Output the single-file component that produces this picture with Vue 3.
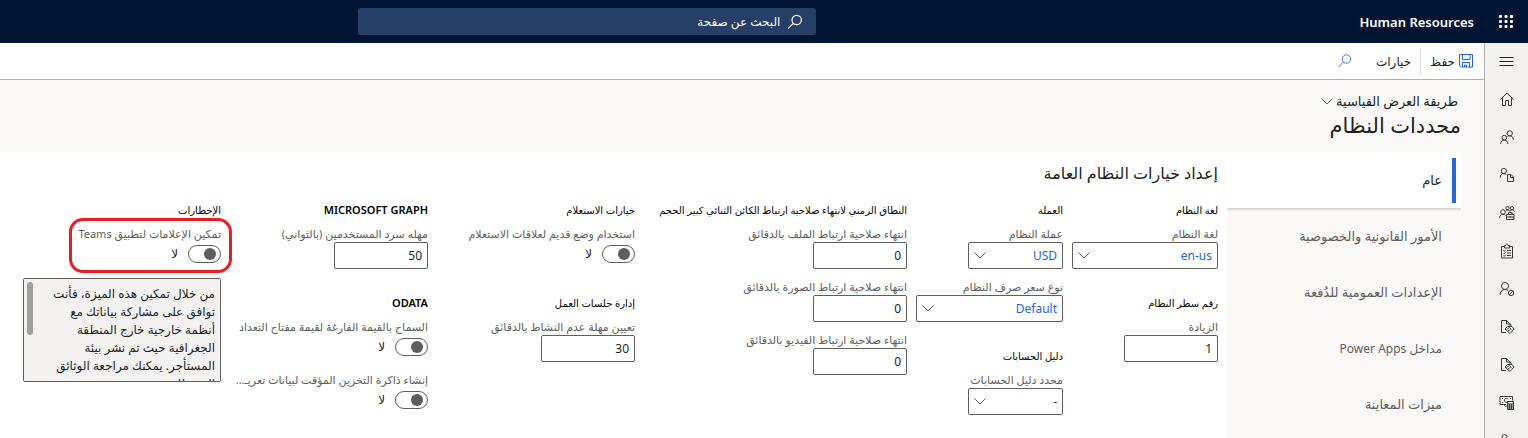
<script setup>
import { ref } from 'vue'

const tabs = [
  'عام',
  'الأمور القانونية والخصوصية',
  'الإعدادات العمومية للدُفعة',
  'مداخل Power Apps',
  'ميزات المعاينة',
]
const activeTab = ref(0)
const hasLatin = (text) => /[A-Za-z]/.test(text)

const navItems = [
  { icon: 'home', label: 'الصفحة الرئيسية' },
  { icon: 'people', label: 'الأشخاص' },
  { icon: 'personDoc', label: 'ملف الموظف' },
  { icon: 'team', label: 'الفريق' },
  { icon: 'clipboard', label: 'المهام' },
  { icon: 'personBlock', label: 'الإجازات والغياب' },
  { icon: 'docTag', label: 'المزايا' },
  { icon: 'docTag', label: 'إدارة المزايا' },
  { icon: 'payroll', label: 'التعويضات' },
  { icon: 'person', label: 'الخدمة الذاتية' },
]

const columns = ref([
  [
    { title: 'لغة النظام', fields: [{ id: 'lang', type: 'select', label: 'لغة النظام', value: 'en-us', size: 'full' }] },
    { title: 'رقم سطر النظام', fields: [{ id: 'inc', type: 'text', label: 'الزيادة', value: '1' }] },
  ],
  [
    {
      title: 'العملة',
      fields: [
        { id: 'cur', type: 'select', label: 'عملة النظام', value: 'USD' },
        { id: 'rate', type: 'select', label: 'نوع سعر صرف النظام', value: 'Default', size: 'full' },
      ],
    },
    { title: 'دليل الحسابات', fields: [{ id: 'coa', type: 'select', label: 'محدد دليل الحسابات', value: '-', plain: true }] },
  ],
  [
    {
      title: 'النطاق الزمني لانتهاء صلاحية ارتباط الكائن الثنائي كبير الحجم',
      fields: [
        { id: 'file', type: 'text', label: 'انتهاء صلاحية ارتباط الملف بالدقائق', value: '0' },
        { id: 'image', type: 'text', label: 'انتهاء صلاحية ارتباط الصورة بالدقائق', value: '0' },
        { id: 'video', type: 'text', label: 'انتهاء صلاحية ارتباط الفيديو بالدقائق', value: '0' },
      ],
    },
  ],
  [
    { title: 'خيارات الاستعلام', fields: [{ id: 'legacy', type: 'toggle', label: 'استخدام وضع قديم لعلاقات الاستعلام', value: false }] },
    { title: 'إدارة جلسات العمل', fields: [{ id: 'idle', type: 'text', label: 'تعيين مهلة عدم النشاط بالدقائق', value: '30' }] },
  ],
  [
    { title: 'MICROSOFT GRAPH', fields: [{ id: 'graph', type: 'text', label: 'مهله سرد المستخدمين (بالثواني)', value: '50' }] },
    {
      title: 'ODATA',
      fields: [
        { id: 'enum', type: 'toggle', label: 'السماح بالقيمة الفارغة لقيمة مفتاح التعداد', value: false },
        { id: 'cache', type: 'toggle', label: 'إنشاء ذاكرة التخزين المؤقت لبيانات تعريـ...', value: false },
      ],
    },
  ],
  [
    {
      title: 'الإخطارات',
      fields: [
        { id: 'teams', type: 'toggle', label: 'تمكين الإعلامات لتطبيق Teams', value: false, marked: true },
        {
          id: 'note',
          type: 'note',
          label: 'إشعار الخصوصية',
          value:
            'من خلال تمكين هذه الميزة، فأنت توافق على مشاركة بياناتك مع أنظمة خارجية خارج المنطقة الجغرافية حيث تم نشر بيئة المستأجر. يمكنك مراجعة الوثائق الفنية للميزة.',
        },
      ],
    },
  ],
])
</script>

<template>
  <div class="app" dir="rtl" lang="ar">
    <header class="topbar">
      <button class="waffle" type="button" aria-label="مشغل التطبيقات">
        <svg width="14" height="14" viewBox="0 0 14 14" fill="#fff">
          <template v-for="r in 3" :key="r">
            <rect v-for="c in 3" :key="c" :x="(c - 1) * 5.5" :y="(r - 1) * 5" width="3" height="3" rx="1" />
          </template>
        </svg>
      </button>
      <a class="brand" href="#">Human Resources</a>
      <div class="search">
        <svg width="16" height="16" viewBox="0 0 16 16" fill="none" stroke="#fff" stroke-width="1.2">
          <circle cx="9.7" cy="6" r="4.7" />
          <path d="M6.3 9.4 1 14.7" />
        </svg>
        <input type="text" aria-label="البحث عن صفحة" placeholder="البحث عن صفحة" />
      </div>
    </header>

    <div class="body">
      <nav class="rail" aria-label="التنقل">
        <button type="button" class="menu" aria-label="القائمة">
          <svg width="15" height="11" viewBox="0 0 15 11" stroke="#222" stroke-width="1">
            <path d="M.5 1.5h14M.5 5.5h14M.5 9.5h14" />
          </svg>
        </button>
        <button v-for="(n, i) in navItems" :key="i" type="button" :aria-label="n.label">
          <svg width="16" height="16" viewBox="0 0 16 16" fill="none" stroke="#3b3a39" stroke-width="1">
            <path v-if="n.icon === 'home'" d="M1.500 8.500 8 2l6.500 6.500M3.500 7v7.500h3V9.500h3v5h3V7" />
            <template v-else-if="n.icon === 'people'">
              <circle cx="10.800" cy="4.300" r="2.600" />
              <circle cx="5.300" cy="8.700" r="2.400" />
              <path d="M8.500 7.500c.6-.4 1.300-.6 2.200-.6 2.100 0 3.500 1.400 3.700 3.600M1.700 15c0-2.500 1.500-3.900 3.600-3.900s3.600 1.400 3.600 3.900" />
            </template>
            <template v-else-if="n.icon === 'personDoc'">
              <circle cx="4.800" cy="4" r="2.600" />
              <path d="M1.200 10.800c0-2.700 1.600-4.200 3.600-4.200 1 0 1.900.4 2.600 1M8.500 7.500h3.500l2.500 2.500v4.500h-6zM11.500 7.500v3h3" />
            </template>
            <template v-else-if="n.icon === 'team'">
              <circle cx="4" cy="7" r="2.300" />
              <circle cx="8.500" cy="3.200" r="1.700" />
              <circle cx="13" cy="3.200" r="1.700" />
              <path d="M.5 13c0-2.400 1.500-3.700 3.500-3.700 1.100 0 2 .4 2.600 1M6.500 6c.5-.8 1.200-1.100 2-1.100 1 0 1.800.6 2.200 1.400.4-.8 1.300-1.400 2.300-1.400 1.100 0 2 .6 2.500 1.600M7.500 9.500h7.500v5H7.500zM9.500 9.500v-2h3.500v2M7.500 12h7.500M11.200 11v2" />
            </template>
            <path v-else-if="n.icon === 'clipboard'" d="M5.500 3.500h-3v11.500h11V3.500h-3M5.500 2.500h1.500c0-2 2-2 2 0h1.500v2.500h-5zM4.500 7.500l.8.800 1.200-1.400M8 7.500h4M4.500 10l.8.800L6.500 9.400M8 10h4M4.500 12.500l.8.800 1.200-1.400M8 12.500h4" />
            <template v-else-if="n.icon === 'personBlock'">
              <circle cx="6" cy="5" r="3.500" />
              <circle cx="12" cy="12" r="2.700" />
              <path d="M1 14c0-3.300 2-5.500 5-5.500 1.200 0 2.200.3 3 .9M10.200 13.800l3.600-3.600" />
            </template>
            <path v-else-if="n.icon === 'docTag'" d="M7 13.500H2.500v-12h5L11 5v2M7.500 1.500V5H11M6 10l2.500-2.500h4.500L15 10l-4 4.500zM7.500 10.500l3-2 2 2M9 12l2.500-1.500M11 4.500l1.500 2" />
            <path v-else-if="n.icon === 'payroll'" d="M7 9.500H1v-8h12.500v4M3 3.500h1M11 3.500h1M3 7.500h1M8.500 7a2 2 0 1 1 .6-2.500M5 9.500l1.500 2h1M8.500 6.500h6v8h-6zM8.500 9h6M10.500 9v5.500M12.500 9v5.500M8.500 11h6M8.500 13h6" />
            <template v-else>
              <circle cx="5.500" cy="4" r="2.500" />
              <path d="M1 11c0-3 2-4.500 4.500-4.500S10 8 10 11" />
            </template>
          </svg>
        </button>
      </nav>

      <main class="main">
        <div class="commands">
          <button type="button" class="save">
            <svg width="14" height="14" viewBox="0 0 14 14" fill="none" stroke="#2266e3" stroke-width="1">
              <path d="M1 .5h12.500v12.500H2.500L.5 11.500V.5zM3.500 .5v5h7.500v-5M3.500 13V8.500h7V13M5.500 13v-2h2v2" />
            </svg>
            <span>حفظ</span>
          </button>
          <button type="button" class="options">خيارات</button>
          <button type="button" class="find" aria-label="بحث">
            <svg width="14" height="14" viewBox="0 0 14 14" fill="none" stroke="#5b74d8" stroke-width="1">
              <circle cx="8.500" cy="5" r="4.200" />
              <path d="M5.500 8 .5 13" />
            </svg>
          </button>
        </div>

        <div class="heading">
          <button type="button" class="view">
            <span>طريقة العرض القياسية</span>
            <svg class="chev" width="12" height="7" viewBox="0 0 12 7"><path d="M.5.5 6 6 11.500.5" /></svg>
          </button>
          <h1>محددات النظام</h1>
        </div>

        <div class="workspace">
          <div class="tabs" role="tablist">
            <button
              v-for="(t, i) in tabs"
              :key="t"
              type="button"
              role="tab"
              :aria-selected="i === activeTab"
              :class="{ active: i === activeTab, latin: hasLatin(t) }"
              @click="activeTab = i"
            >
              {{ t }}
            </button>
          </div>

          <section class="panel">
            <h2>إعداد خيارات النظام العامة</h2>
            <form class="columns" @submit.prevent>
              <div v-for="(col, ci) in columns" :key="ci" class="column">
                <div v-for="g in col" :key="g.title" class="group">
                  <h3 :class="{ latin: hasLatin(g.title) }">{{ g.title }}</h3>
                  <div v-for="f in g.fields" :key="f.id" class="field" :class="{ marked: f.marked }">
                    <label v-if="f.type !== 'note'" :for="f.id">{{ f.label }}</label>
                    <input v-if="f.type === 'text'" :id="f.id" v-model="f.value" type="text" class="box" />
                    <div v-else-if="f.type === 'select'" class="pick" :class="f.size">
                      <select :id="f.id" v-model="f.value" class="box" :class="{ plain: f.plain }">
                        <option>{{ f.value }}</option>
                      </select>
                      <svg class="chev" width="12" height="7" viewBox="0 0 12 7"><path d="M.5.5 6 6 11.500.5" /></svg>
                    </div>
                    <div v-else-if="f.type === 'toggle'" class="switch">
                      <input :id="f.id" v-model="f.value" type="checkbox" role="switch" />
                      <span>{{ f.value ? 'نعم' : 'لا' }}</span>
                    </div>
                    <div v-else class="note">
                      <textarea :id="f.id" :aria-label="f.label" :value="f.value" readonly></textarea>
                      <span class="thumb"></span>
                    </div>
                  </div>
                </div>
              </div>
            </form>
          </section>
        </div>
      </main>
    </div>
  </div>
</template>

<style>
html,
body,
#app {
  height: 100%;
}
body {
  margin: 0;
  overflow: hidden;
}
</style>

<style scoped>
.app {
  height: 100%;
  display: flex;
  flex-direction: column;
  overflow: hidden;
  background: #faf9f8;
  color: #201f1e;
  font-family: 'Noto Sans', 'DejaVu Sans', sans-serif;
  font-size: 12px;
}
* {
  box-sizing: border-box;
}
button,
input,
select,
textarea {
  font: inherit;
  color: inherit;
  border: 0;
  margin: 0;
  padding: 0;
  background: none;
}
svg {
  display: block;
  flex: none;
}
.chev {
  fill: none;
  stroke: #605e5c;
}
.topbar {
  flex: none;
  height: 43px;
  display: flex;
  align-items: center;
  background: #001433;
  color: #fff;
}
.waffle {
  width: 44px;
  display: flex;
  justify-content: center;
}
.brand {
  margin-inline-start: 10px;
  color: #fff;
  font-size: 13px;
  font-weight: 600;
  text-decoration: none;
}
.search {
  width: 30%;
  height: 27px;
  margin-inline: auto 358px;
  padding-inline: 13px;
  display: flex;
  align-items: center;
  gap: 7px;
  background: #263f66;
  border-radius: 2px;
}
.search input {
  flex: 1;
  min-width: 0;
  outline: 0;
}
.search input::placeholder {
  color: #fff;
}
.body {
  flex: 1;
  min-height: 0;
  display: flex;
}
.rail {
  flex: none;
  width: 44px;
  display: flex;
  flex-direction: column;
  background: #f3f2f1;
  border-inline-end: 1px solid #b3b0ad;
}
.rail button {
  flex: none;
  height: 38px;
  display: flex;
  align-items: center;
  justify-content: center;
}
.rail .menu {
  height: 37px;
}
.main {
  flex: 1;
  min-width: 0;
  display: flex;
  flex-direction: column;
}
.commands {
  flex: none;
  height: 37px;
  padding-inline-start: 11px;
  display: flex;
  align-items: center;
  background: #fff;
  border-bottom: 1px solid #b3b0ad;
}
.save {
  height: 27px;
  padding-inline-end: 9px;
  display: flex;
  align-items: center;
  gap: 4px;
  border-inline-end: 1px solid #e1dfdd;
}
.options {
  margin-inline: 9px 24px;
}
.heading {
  flex: none;
  height: 72px;
  padding: 11px 23px 0;
}
.view {
  height: 20px;
  margin-inline-start: 3px;
  display: flex;
  align-items: center;
  gap: 3px;
  font-size: 13px;
}
h1,
h2,
h3 {
  margin: 0;
  font-weight: 400;
}
h1 {
  font-size: 21px;
  line-height: 28px;
}
.workspace {
  flex: 1;
  min-height: 0;
  padding-inline-start: 23px;
  display: flex;
}
.tabs {
  flex: none;
  width: 234px;
  display: flex;
  flex-direction: column;
}
.tabs button {
  flex: none;
  height: 56px;
  padding-inline-start: 19px;
  text-align: start;
  font-size: 13px;
  color: #605e5c;
}
.tabs .latin {
  font-size: 12px;
}
.tabs .active {
  padding-inline-start: 5px;
  display: flex;
  align-items: center;
  background: #fff;
  color: #201f1e;
  box-shadow: 0 1px 3px rgba(0, 0, 0, 0.25);
  clip-path: inset(0 0 -5px 0);
}
.tabs .active::before {
  content: '';
  width: 4px;
  height: 45px;
  margin-inline-end: 10px;
  background: #2266e3;
}
.panel {
  flex: 1;
  min-width: 0;
  padding: 8px 9px 0 0;
  background: #fff;
  overflow: hidden;
}
h2 {
  font-size: 16px;
  line-height: 26px;
}
.columns {
  margin-top: 15px;
  display: grid;
  grid-template-columns: 146px 147px 263px repeat(3, 198px);
  column-gap: 9px;
}
.column {
  min-width: 0;
  display: flex;
  flex-direction: column;
  gap: 25px;
}
.group {
  display: flex;
  flex-direction: column;
}
h3 {
  height: 18px;
  margin-bottom: 6px;
  font-size: 10px;
  line-height: 18px;
  white-space: nowrap;
  color: #000;
}
h3.latin {
  font-size: 11px;
  font-weight: 600;
}
.field {
  position: relative;
  display: flex;
  flex-direction: column;
}
.field + .field {
  margin-top: 9px;
}
label {
  font-size: 11px;
  line-height: 17px;
  height: 17px;
  color: #605e5c;
  white-space: nowrap;
}
.box {
  width: 94px;
  height: 27px;
  padding-inline: 5px;
  border: 1px solid #605e5c;
  border-radius: 2px;
  background: #fff;
}
.pick {
  position: relative;
  width: 95px;
}
.pick.full {
  width: 100%;
}
.pick .box {
  display: block;
  width: 100%;
  appearance: none;
  color: #2266e3;
}
.pick .plain {
  color: #201f1e;
}
.pick .chev {
  position: absolute;
  left: 6px;
  top: 10px;
  pointer-events: none;
}
.switch {
  height: 27px;
  padding-top: 3px;
  display: flex;
  align-items: flex-start;
  gap: 10px;
  line-height: 18px;
}
.switch input {
  appearance: none;
  width: 33px;
  height: 18px;
  padding: 2px 4px;
  border: 1px solid #605e5c;
  border-radius: 9px;
}
.switch input::before {
  content: '';
  display: block;
  width: 12px;
  height: 12px;
  border-radius: 50%;
  background: #605e5c;
}
.switch input:checked::before {
  margin-inline-start: auto;
}
.marked::after {
  content: '';
  position: absolute;
  inset: -7px -11px -4px 46px;
  border: 3px solid #ed1c24;
  border-radius: 14px;
  pointer-events: none;
}
.note {
  position: relative;
}
textarea {
  display: block;
  width: 100%;
  height: 104px;
  padding: 6px 5px 0 26px;
  border: 1px solid #605e5c;
  border-radius: 2px;
  background: #f3f2f1;
  line-height: 18px;
  resize: none;
  scrollbar-width: none;
}
.thumb {
  position: absolute;
  left: 4px;
  top: 4px;
  width: 6px;
  height: 53px;
  border-radius: 3px;
  background: #a19f9d;
  pointer-events: none;
}
</style>
